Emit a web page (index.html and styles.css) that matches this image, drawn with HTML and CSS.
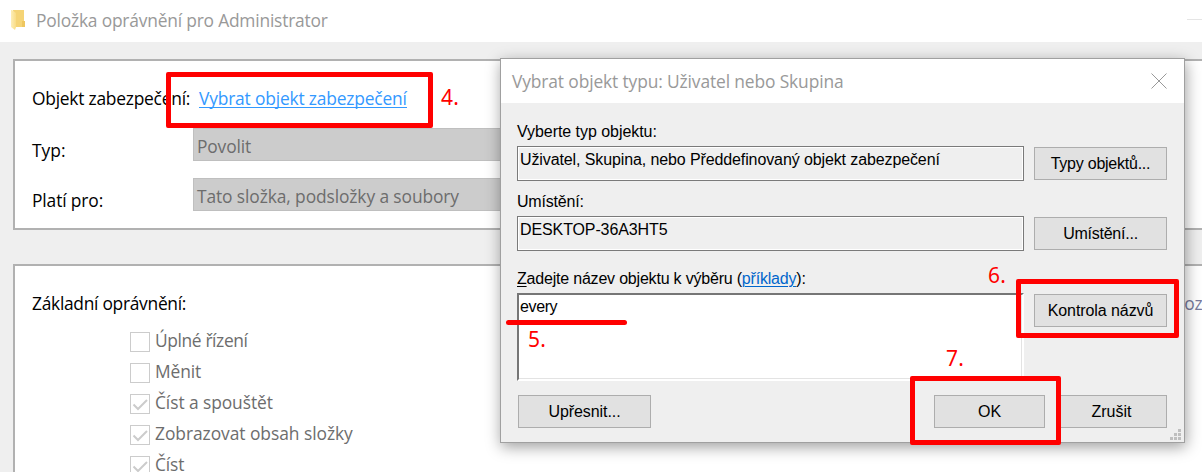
FILE: index.html
```html
<!DOCTYPE html>
<html lang="cs">
<head>
<meta charset="utf-8">
<title>Položka oprávnění pro Administrator</title>
<link rel="stylesheet" href="styles.css">
</head>
<body>
<main class="desktop">
  <header class="titlebar">
    <svg class="folder" width="16" height="20" viewBox="0 0 16 20">
      <defs><linearGradient id="fold" x1="0" x2="1"><stop offset="0" stop-color="#fdeeb8"/><stop offset="1" stop-color="#f9dc85"/></linearGradient></defs>
      <path d="M3 0h11v11h1v6H4z" fill="#f5d476"/>
      <path d="M12 11h3v6h-3z" fill="#eec65f"/>
      <path d="M1 0h1l4 3v14l-1 3-4-3z" fill="url(#fold)"/>
    </svg>
    <h1 class="title sp20">Položka oprávnění pro Administrator</h1>
    <span class="minimize"></span>
  </header>

  <section class="panel principal">
    <div class="row row-link"><span class="label sp22">Objekt zabezpečení:</span><a class="pick sp16">Vybrat objekt zabezpečení</a></div>
    <div class="row"><span class="label">Typ:</span><div class="combo sp15">Povolit</div></div>
    <div class="row"><span class="label sp13">Platí pro:</span><div class="combo sp11">Tato složka, podsložky a soubory</div></div>
  </section>

  <section class="panel permissions">
    <div class="perm-head"><span class="sp27">Základní oprávnění:</span><span class="advanced">oz</span></div>
    <ul class="perms">
      <li><span class="box"></span><span class="sp35">Úplné řízení</span></li>
      <li><span class="box"></span><span class="sp11">Měnit</span></li>
      <li><span class="box"><svg width="18" height="18" viewBox="0 0 18 18"><path d="M2.500 9.500l4.500 4.500 9-9"/></svg></span><span class="sp08">Číst a spouštět</span></li>
      <li><span class="box"><svg width="18" height="18" viewBox="0 0 18 18"><path d="M2.500 9.500l4.500 4.500 9-9"/></svg></span><span class="sp05">Zobrazovat obsah složky</span></li>
      <li><span class="box"><svg width="18" height="18" viewBox="0 0 18 18"><path d="M2.500 9.500l4.500 4.500 9-9"/></svg></span><span class="sp15">Číst</span></li>
    </ul>
  </section>
</main>

<section class="dialog">
  <header class="dialog-title">
    <h2 class="sp13">Vybrat objekt typu: Uživatel nebo Skupina</h2>
    <svg class="close" width="16" height="16" viewBox="0 0 16 16"><path d="M.5.5l15 15M15.500.5l-15 15"/></svg>
  </header>
  <div class="dialog-body">
    <div class="caption first sp05">Vyberte typ objektu:</div>
    <div class="line"><div class="field sp11">Uživatel, Skupina, nebo Předdefinovaný objekt zabezpečení</div><div class="button sp22">Typy objektů...</div></div>
    <div class="caption second sp20">Umístění:</div>
    <div class="line"><div class="field sp11">DESKTOP-36A3HT5</div><div class="button sp22">Umístění...</div></div>
    <div class="caption third sp20"><u>Z</u>adejte název objektu k výběru (<a class="examples">příklady</a>):</div>
    <div class="line names"><div class="textarea sp35">every</div><div class="button sp08">Kontrola názvů</div></div>
    <div class="actions"><div class="button more sp08">Upřesnit...</div><div class="button ok">OK</div><div class="button cancel">Zrušit</div></div>
  </div>
  <svg class="grip" width="11" height="11" viewBox="0 0 11 11"><path d="M8 0h3v3H8zM4 4h3v3H4zM8 4h3v3H8zM0 8h3v3H0zM4 8h3v3H4zM8 8h3v3H8z"/></svg>
</section>

<!-- Tutorial step marks -->
<div class="mark mark-link"></div><span class="step step4">4.</span>
<div class="underline"></div><span class="step step5">5.</span>
<div class="mark mark-check"></div><span class="step step6">6.</span>
<div class="mark mark-ok"></div><span class="step step7">7.</span>
</body>
</html>
```
FILE: styles.css
```css
* { box-sizing: border-box; }
body {
  margin: 0;
  width: 1202px;
  height: 472px;
  overflow: hidden;
  position: relative;
  background: #efefef;
  color: #000;
  font: 17.4px/24px "Open Sans", "Noto Sans", sans-serif;
}
h1, h2 { margin: 0; font: inherit; }
.desktop { height: 472px; overflow: hidden; }

.sp05 { letter-spacing: -0.05px; }
.sp08 { letter-spacing: -0.08px; }
.sp11 { letter-spacing: -0.11px; }
.sp13 { letter-spacing: -0.13px; }
.sp15 { letter-spacing: -0.15px; }
.sp16 { letter-spacing: -0.18px; }
.sp20 { letter-spacing: -0.2px; }
.sp22 { letter-spacing: -0.24px; }
.sp27 { letter-spacing: -0.29px; }
.sp35 { letter-spacing: -0.38px; }

/* Main window */
.titlebar {
  display: flex;
  align-items: flex-start;
  height: 42px;
  padding: 8px 0 0 10px;
  background: #fff;
  color: #999;
}
.folder { margin-top: 2px; }
.title { margin-left: 10px; }
.minimize { margin: 11px 0 0 auto; width: 15px; height: 1px; background: #e5e5e5; }

.panel {
  margin-left: 13px;
  width: 1240px;
  border: 2px solid #b1b1b1;
  background: #fff;
}
.principal { margin-top: 17px; height: 171px; padding: 25px 0 0 17px; }
.row { display: flex; height: 50px; }
.row-link { height: 42px; }
.label { width: 161px; white-space: nowrap; }
.row:not(.row-link) .label { padding-top: 10px; }
.pick {
  height: 22px;
  margin-left: 6px;
  color: #3399ff;
  border-bottom: 1px solid #3399ff;
}
.combo {
  width: 800px;
  height: 33px;
  padding: 5px 3px;
  border: 1px solid #bfbfbf;
  background: #ccc;
  color: #6d6d6d;
}

.permissions { margin-top: 34px; height: 240px; padding: 25px 0 0 17px; }
.perm-head { display: flex; }
.advanced { margin-left: 998px; color: #777b9d; }
.perms { list-style: none; margin: 13px 0 0 98px; padding: 0; color: #6d6d6d; }
.perms li { display: flex; height: 31px; }
.box {
  width: 20px;
  height: 20px;
  margin: 4px 5px 0 0;
  border: 1px solid #ccc;
}
.box svg { display: block; fill: none; stroke: #ccc; stroke-width: 2; }

/* Object picker dialog */
.dialog {
  position: absolute;
  left: 500px;
  top: 58px;
  width: 685px;
  height: 385px;
  border: 1px solid #a0a0a0;
  background: #efefef;
  box-shadow: 1px 4px 14px rgba(0, 0, 0, 0.38);
}
.dialog-title {
  display: flex;
  justify-content: space-between;
  height: 44px;
  padding: 10px 17px 0 11px;
  background: #fff;
  color: #999;
}
.close { margin-top: 4px; fill: none; stroke: #999; stroke-width: 1; }
.dialog-body {
  padding: 0 17px 0 16px;
  font: 16px/20px "Liberation Sans", Arial, sans-serif;
}
.caption { height: 20px; white-space: nowrap; }
.first { margin-top: 19px; }
.second { margin-top: 11px; }
.third { margin-top: 18px; }
.caption u { text-underline-offset: 2px; text-decoration-thickness: 1px; }
.examples { color: #0066cc; text-decoration: underline; text-underline-offset: 2px; text-decoration-thickness: 1px; }
.line { display: flex; justify-content: space-between; margin-top: 4px; }
.field {
  width: 507px;
  height: 35px;
  padding: 3px 2px;
  border: 1px solid #7a7a7a;
  box-shadow: inset 0 0 0 1px #fff;
}
.button {
  width: 133px;
  height: 33px;
  margin-top: 1px;
  border: 1px solid #adadad;
  background: #e1e1e1;
  text-align: center;
  line-height: 31px;
}
.textarea {
  width: 507px;
  height: 88px;
  padding: 2px 1px;
  background: #fff;
  border: 2px solid #fff;
  border-top-color: #767676;
  border-left-color: #767676;
  box-shadow: inset -1px -1px 0 #e3e3e3;
}
.names { margin-top: 4px; }
.actions { display: flex; margin: 13px 0 0 1px; }
.ok { width: 111px; margin-left: 283px; }
.cancel { width: 111px; margin-left: 11px; }
.grip { position: absolute; right: 3px; bottom: 2px; fill: #bfbfbf; }

/* Red annotations */
.mark { position: absolute; border: 5px solid #f00; border-radius: 2px; }
.mark-link { left: 166px; top: 72px; width: 267px; height: 56px; }
.mark-check { left: 1016px; top: 279px; width: 163px; height: 59px; }
.mark-ok { left: 910px; top: 376px; width: 151px; height: 69px; }
.underline { position: absolute; left: 506px; top: 320px; width: 121px; height: 5px; border-radius: 3px; background: #f00; }
.step { position: absolute; color: #f00; font-family: "Noto Sans", sans-serif; font-size: 21px; letter-spacing: 0.3px; }
.step4 { left: 441px; top: 85px; }
.step5 { left: 528px; top: 327px; }
.step6 { left: 988px; top: 263px; }
.step7 { left: 946px; top: 346px; }
```
